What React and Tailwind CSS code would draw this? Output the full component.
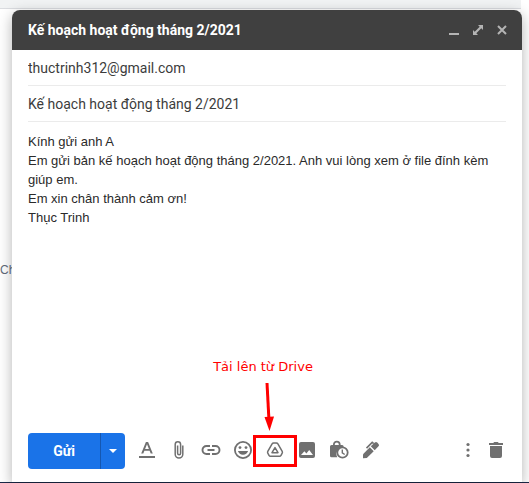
import { useState } from "react";

const tools = [
  {
    label: "Formatting options",
    icon: (
      <path d="M2 16h16v2H2zM8.9 2h2.2l4.700 11.500h-2.100l-1.100-2.800H7.400l-1.100 2.800H4.200zm-.8 6.900h3.800L10 4.200z" />
    ),
  },
  {
    label: "Attach files",
    icon: (
      <path
        d="M13.800 5.500v8.700a3.800 3.800 0 0 1-7.600 0V4.500a2.700 2.700 0 0 1 5.400 0v8.800a1.500 1.500 0 0 1-3 0V5.500"
        fill="none"
        stroke="currentColor"
        strokeWidth="1.5"
      />
    ),
  },
  {
    label: "Insert link",
    icon: (
      <path
        d="M9 6H5.500a4 4 0 0 0 0 8H9M11 6h3.500a4 4 0 0 1 0 8H11M6.500 10h7"
        fill="none"
        stroke="currentColor"
        strokeWidth="1.9"
      />
    ),
  },
  {
    label: "Insert emoji",
    icon: (
      <>
        <circle cx="10" cy="10" r="8.1" fill="none" stroke="currentColor" strokeWidth="1.8" />
        <circle cx="7" cy="7.600" r="1.400" />
        <circle cx="13" cy="7.600" r="1.400" />
        <path d="M4.900 11h10.200a5.400 5.400 0 0 1-10.200 0z" />
      </>
    ),
  },
  {
    label: "Insert files using Drive",
    icon: (
      <g fill="none" stroke="currentColor" strokeWidth="1.5" strokeLinejoin="round">
        <path d="M8.600 3h2.800q1 0 1.500.8l4.300 7.600q.5.9 0 1.800l-1.200 2.200q-.5.900-1.500.900H5.500q-1 0-1.500-.9L2.800 13.200q-.5-.9 0-1.800L7.100 3.800Q7.600 3 8.600 3z" />
        <path d="M10 7.600 13 12.700H7z" />
      </g>
    ),
  },
  {
    label: "Insert photo",
    icon: (
      <path
        fillRule="evenodd"
        d="M4 2h12a2 2 0 0 1 2 2v12a2 2 0 0 1-2 2H4a2 2 0 0 1-2-2V4a2 2 0 0 1 2-2zM4 15h12l-3.800-5-2.800 3.600-2-2.300z"
      />
    ),
  },
  {
    label: "Toggle confidential mode",
    icon: (
      <>
        <path d="M4.900 6V4.500a2.900 2.900 0 0 1 5.800 0V6" fill="none" stroke="currentColor" strokeWidth="1.8" />
        <path d="M2.500 5h10.600a1.500 1.500 0 0 1 1.500 1.500v1A6.500 6.500 0 0 0 8.300 17.200H2.500A1.500 1.500 0 0 1 1 15.700V6.500A1.500 1.500 0 0 1 2.500 5z" />
        <circle cx="13.500" cy="12.500" r="5.200" fill="white" stroke="currentColor" strokeWidth="1.800" />
        <path d="M13.300 9.400v3.500l2.400 1.600" fill="none" stroke="currentColor" strokeWidth="1.400" />
      </>
    ),
  },
  {
    label: "Insert signature",
    icon: (
      <>
        <path d="M8.800 7.300 12.700 11.200 5.800 17.900 2 18.300V14.300z" />
        <path d="M9.800 6.300 13.700 10.200 17.500 6.300a1.700 1.700 0 0 0 0-2.400L16.200 2.600a1.700 1.700 0 0 0-2.400 0z" />
        <path d="M12.700 3.700 11.200 2.400 5.500 8.100" fill="none" stroke="currentColor" strokeWidth="1.600" />
      </>
    ),
  },
];

function ToolIcon({ children }) {
  return (
    <svg viewBox="0 0 20 20" className="size-5" fill="currentColor" aria-hidden="true">
      {children}
    </svg>
  );
}

function MailPage() {
  return (
    <div className="flex min-h-screen flex-col border-b border-[#1b2a49] bg-white">
      <div className="mr-2 h-[9px] border-b border-[#dadce0] bg-[#f1f3f4]" />
      <p className="mt-[252px] font-['Liberation_Sans',Arial,sans-serif] text-xs leading-[18px] tracking-normal text-[#5f6b7a]">
        Ch
      </p>
    </div>
  );
}

function WindowControls() {
  return (
    <div className="flex gap-1 text-[#b4b4b4]">
      <button type="button" aria-label="Minimize" className="grid size-5 place-items-center">
        <svg viewBox="0 0 10 10" className="size-[10px]">
          <path d="M0 8h10v2H0z" fill="currentColor" />
        </svg>
      </button>
      <button type="button" aria-label="Full screen" className="grid size-5 place-items-center">
        <svg viewBox="0 0 10 10" className="size-[10px]" fill="currentColor">
          <path d="M5 0h5v5L8.300 3.300 3.300 8.300 5 10H0V5l1.700 1.700 5-5z" />
        </svg>
      </button>
      <button type="button" aria-label="Close" className="grid size-5 place-items-center">
        <svg viewBox="0 0 10 10" className="size-[10px]">
          <path d="M1 1l8 8M9 1L1 9" stroke="currentColor" strokeWidth="2" />
        </svg>
      </button>
    </div>
  );
}

function DriveCallout() {
  return (
    <div className="pointer-events-none absolute -bottom-[7px] left-1/2 flex w-[120px] -translate-x-1/2 flex-col items-center text-[#f00]">
      <span className="mr-6 font-['DejaVu_Sans',sans-serif] text-[13px] leading-5 whitespace-nowrap">
        Tải lên từ Drive
      </span>
      <svg viewBox="0 0 16 58" className="mr-3 h-[58px] w-4" aria-hidden="true">
        <path d="M6 6l2 38" stroke="currentColor" strokeWidth="3" />
        <path d="M3.500 40 13 39.500 8.500 54z" fill="currentColor" />
      </svg>
      <div className="h-8 w-11 border-3 border-[#f00]" />
    </div>
  );
}

function App() {
  const [to, setTo] = useState("thuctrinh312@gmail.com");
  const [subject, setSubject] = useState("Kế hoạch hoạt động tháng 2/2021");

  return (
    <main className="relative font-[Roboto,sans-serif] text-[#2a2a2a]">
      <MailPage />

      <form
        onSubmit={(e) => e.preventDefault()}
        className="absolute top-[10px] right-[7px] bottom-px left-3 flex flex-col rounded-t-lg bg-white shadow-[0_4px_14px_rgba(0,0,0,0.3)]"
      >
        <header className="flex h-10 shrink-0 items-center justify-between rounded-t-lg bg-[#404040] pr-[10px] pl-4">
          <h1 className="text-sm font-bold text-white">{subject}</h1>
          <WindowControls />
        </header>

        <div className="flex flex-col px-4 text-sm text-[#3c3c3c]">
          <input
            type="email"
            aria-label="To"
            value={to}
            onChange={(e) => setTo(e.target.value)}
            className="h-9 border-b border-[#ebebeb] outline-none"
          />
          <input
            type="text"
            aria-label="Subject"
            value={subject}
            onChange={(e) => setSubject(e.target.value)}
            className="h-9 border-b border-[#ebebeb] outline-none"
          />
        </div>

        <div
          role="textbox"
          aria-label="Message body"
          contentEditable
          suppressContentEditableWarning
          className="flex-1 px-4 pt-[10px] font-['Liberation_Sans',Arial,sans-serif] text-[13px] leading-[19px] outline-none"
        >
          <p>Kính gửi anh A</p>
          <p>Em gửi bản kế hoạch hoạt động tháng 2/2021. Anh vui lòng xem ở file đính kèm giúp em.</p>
          <p>Em xin chân thành cảm ơn!</p>
          <p>Thục Trinh</p>
        </div>

        <footer className="flex items-center px-4 pb-[13px] text-[#707070]">
          <div className="flex h-9 overflow-hidden rounded bg-[#1a73e8] text-white">
            <button type="submit" className="w-[72px] text-sm font-bold">
              Gửi
            </button>
            <button
              type="button"
              aria-label="More send options"
              className="grid w-[25px] place-items-center border-l border-[#1557b0]"
            >
              <svg viewBox="0 0 8 4" className="h-1 w-2" fill="currentColor">
                <path d="M0 0h8L4 4z" />
              </svg>
            </button>
          </div>

          <div className="ml-3 flex flex-1 items-center gap-3 pb-0.5">
            {tools.map((tool) => (
              <div key={tool.label} className="relative flex">
                <button type="button" aria-label={tool.label}>
                  <ToolIcon>{tool.icon}</ToolIcon>
                </button>
                {tool.label === "Insert files using Drive" && <DriveCallout />}
              </div>
            ))}

            <button type="button" aria-label="More options" className="ml-auto">
              <ToolIcon>
                <circle cx="10" cy="4.500" r="1.600" />
                <circle cx="10" cy="10" r="1.600" />
                <circle cx="10" cy="15.500" r="1.600" />
              </ToolIcon>
            </button>
            <button type="button" aria-label="Discard draft" className="-ml-1">
              <ToolIcon>
                <path d="M3 3h4.200l1-1h3.600l1 1H17v2H3zM4 6h12v10a2 2 0 0 1-2 2H6a2 2 0 0 1-2-2z" />
              </ToolIcon>
            </button>
          </div>
        </footer>
      </form>
    </main>
  );
}

export default App;
